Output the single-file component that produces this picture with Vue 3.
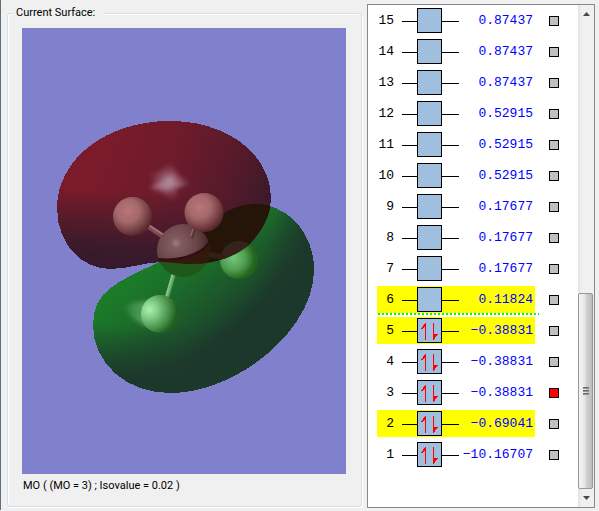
<template>
  <main class="viewer">
    <fieldset class="surface">
      <legend>Current Surface:</legend>
      <svg class="scene" viewBox="22 28 324 446" role="img" aria-label="MO">
        <defs>
          <linearGradient id="redBase" gradientUnits="userSpaceOnUse" x1="95" y1="150" x2="268" y2="218">
            <stop offset="0" stop-color="#7b1b2a" />
            <stop offset="0.4" stop-color="#6e1b2b" />
            <stop offset="0.75" stop-color="#541a2a" />
            <stop offset="1" stop-color="#371a2a" />
          </linearGradient>
          <linearGradient id="redShade" gradientUnits="userSpaceOnUse" x1="160" y1="195" x2="154" y2="260">
            <stop offset="0" stop-color="#361a2b" stop-opacity="0" />
            <stop offset="0.8" stop-color="#361a2b" stop-opacity="0.85" />
            <stop offset="1" stop-color="#361a2b" />
          </linearGradient>
          <linearGradient id="greenBase" gradientUnits="userSpaceOnUse" x1="140" y1="270" x2="225" y2="370">
            <stop offset="0" stop-color="#1b7c28" />
            <stop offset="0.3" stop-color="#1b6b2a" />
            <stop offset="0.6" stop-color="#1c502b" />
            <stop offset="0.8" stop-color="#1c382b" />
            <stop offset="1" stop-color="#1c352b" />
          </linearGradient>
          <linearGradient id="greenSide" gradientUnits="userSpaceOnUse" x1="266" y1="240" x2="312" y2="256">
            <stop offset="0" stop-color="#1c382b" stop-opacity="0" />
            <stop offset="0.85" stop-color="#1c382b" />
            <stop offset="1" stop-color="#1c382b" />
          </linearGradient>
          <linearGradient id="greenLow" gradientUnits="userSpaceOnUse" x1="135" y1="325" x2="132" y2="378">
            <stop offset="0" stop-color="#1c382b" stop-opacity="0" />
            <stop offset="1" stop-color="#1c382b" />
          </linearGradient>
          <radialGradient id="pinkAtom" cx="0.38" cy="0.36" r="0.65">
            <stop offset="0" stop-color="#b97679" />
            <stop offset="0.45" stop-color="#a4686b" />
            <stop offset="0.8" stop-color="#744044" />
            <stop offset="1" stop-color="#57262c" />
          </radialGradient>
          <radialGradient id="limeAtom" cx="0.22" cy="0.38" r="0.8">
            <stop offset="0" stop-color="#a9f2ae" />
            <stop offset="0.3" stop-color="#7fca84" />
            <stop offset="0.65" stop-color="#469147" />
            <stop offset="0.9" stop-color="#235e22" />
            <stop offset="1" stop-color="#235a20" />
          </radialGradient>
          <radialGradient id="dimAtom" cx="0.35" cy="0.45" r="0.65">
            <stop offset="0" stop-color="#76c77a" />
            <stop offset="0.5" stop-color="#4f9d50" />
            <stop offset="0.85" stop-color="#25661f" />
            <stop offset="1" stop-color="#22601f" />
          </radialGradient>
          <radialGradient id="carbon" cx="0.36" cy="0.36" r="0.66">
            <stop offset="0" stop-color="#a07c80" />
            <stop offset="0.15" stop-color="#815b5e" />
            <stop offset="0.6" stop-color="#6a4547" />
            <stop offset="1" stop-color="#40211f" />
          </radialGradient>
          <radialGradient id="redGlow">
            <stop offset="0" stop-color="#b597a7" />
            <stop offset="0.35" stop-color="#a06a7c" stop-opacity="0.75" />
            <stop offset="1" stop-color="#842c40" stop-opacity="0" />
          </radialGradient>
          <linearGradient id="greenGlow" x1="0" y1="0.3" x2="1" y2="0.4">
            <stop offset="0" stop-color="#60b36a" stop-opacity="0.15" />
            <stop offset="0.5" stop-color="#68ad70" stop-opacity="0.7" />
            <stop offset="1" stop-color="#68ad70" stop-opacity="0.8" />
          </linearGradient>
          <filter id="soft" x="-40%" y="-40%" width="180%" height="180%">
            <feGaussianBlur stdDeviation="2" />
          </filter>
          <clipPath id="inRed"><path :d="redLobe" /></clipPath>
          <clipPath id="inGreen"><path :d="greenLobe" /></clipPath>
          <clipPath id="inCarbon"><circle cx="183.500" cy="250.500" r="26.500" /></clipPath>
        </defs>

        <rect x="22" y="28" width="324" height="446" fill="#8080cc" />

        <!-- negative lobe -->
        <g shape-rendering="crispEdges">
          <path :d="greenLobe" fill="url(#greenBase)" />
          <path :d="greenLobe" fill="url(#greenSide)" />
          <path :d="greenLobe" fill="url(#greenLow)" />
        </g>
        <path d="M124 306 L135 302 L150 301 L160 304 L160 322 L145 326 L132 318 Z" fill="url(#greenGlow)" filter="url(#soft)" />
        <circle cx="239" cy="260" r="19" fill="url(#dimAtom)" />
        <path d="M174 273 L167 297" stroke="#64a564" stroke-width="4" />
        <path d="M173 273 L166 297" stroke="#83c385" stroke-width="2" />
        <circle cx="160" cy="314" r="19" fill="url(#limeAtom)" />
        <circle cx="183.500" cy="250.500" r="26.500" fill="#1f5919" />

        <!-- positive lobe -->
        <g shape-rendering="crispEdges">
          <path :d="redLobe" fill="url(#redBase)" />
          <path :d="redLobe" fill="url(#redShade)" />
        </g>
        <g filter="url(#soft)">
          <path d="M146 174 L160 171 L172 160 L177 174 L193 184 L178 188 L174 203 L164 194 L148 191 L154 183 Z" fill="url(#redGlow)" />
          <path d="M150 187 L164 181 L173 174 L172 183 L188 184 L173 187 L168 191 Z" fill="#b08a9b" opacity="0.65" />
        </g>

        <!-- overlap of both lobes -->
        <g clip-path="url(#inRed)">
          <g clip-path="url(#inGreen)">
            <path d="M276 200 H237 L221 205 L190 237 L157 257 V270 H280 Z" fill="#241508" shape-rendering="crispEdges" />
            <circle cx="239" cy="260" r="19" fill="#35221a" />
            <path d="M209 254 L226 258" stroke="#342012" stroke-width="5" />
          </g>
        </g>

        <path d="M146 225 L164 237" stroke="#7d4b4f" stroke-width="5" />
        <path d="M147 224 L164 235" stroke="#a87073" stroke-width="2" />
        <circle cx="132.500" cy="216.500" r="19.500" fill="url(#pinkAtom)" />
        <g clip-path="url(#inRed)">
          <circle cx="183.500" cy="250.500" r="26.500" fill="url(#carbon)" />
          <g clip-path="url(#inCarbon)">
            <path d="M156 258 Q178 261 194 254 Q208 248 210 239 L216 280 H150 Z" fill="#32190c" />
            <path d="M156 259 Q178 261 194 254 Q208 248 210 239" fill="none" stroke="#350b16" stroke-width="2" />
          </g>
        </g>
        <circle cx="204" cy="212.500" r="19.500" fill="url(#pinkAtom)" />
        <path d="M194 229 L191 238" stroke="#59363a" stroke-width="5" />
        <path d="M193 229 L190 237" stroke="#8c6063" stroke-width="2" />
      </svg>
      <p class="caption">MO ( (MO = 3) ; Isovalue = 0.02 )</p>
    </fieldset>

    <section class="orbitals">
      <div class="list">
        <label
          v-for="mo in orbitals"
          :key="mo.id"
          class="orbital"
          :class="{ marked: mo.marked, lumo: mo.id === 6 }"
        >
          <span class="level">
            <span class="num">{{ mo.id }}</span>
            <svg class="box" width="57" height="25" viewBox="0 0 57 25" shape-rendering="crispEdges">
              <rect y="13" width="57" height="1" />
              <rect x="15" width="25" height="25" />
              <rect x="16" y="1" width="23" height="23" fill="#a0bede" />
              <g v-if="mo.id <= 5" fill="#f00">
                <path d="M23 5 H24 V22 H23 V9 H22 V10 H21 V11 H19 V10 H20 V9 H21 V7 H22 V6 H23 Z" />
                <path d="M31 5 H32 V16 H36 V17 H35 V18 H34 V19 H33 V21 H32 V22 H31 Z" />
              </g>
            </svg>
            <span class="energy">{{ mo.energy }}</span>
          </span>
          <input v-model="mo.checked" type="checkbox" />
        </label>
      </div>
      <div class="scrollbar">
        <button type="button" class="arrow" aria-label="Up">
          <svg width="7" height="4" viewBox="0 0 7 4"><path d="M3.500 0 L7 4 H0 Z" fill="#484848" /></svg>
        </button>
        <div class="track">
          <div class="thumb"><i></i><i></i><i></i></div>
        </div>
        <button type="button" class="arrow" aria-label="Down">
          <svg width="7" height="4" viewBox="0 0 7 4"><path d="M0 0 H7 L3.500 4 Z" fill="#484848" /></svg>
        </button>
      </div>
    </section>
  </main>
</template>

<script setup>
import { reactive } from 'vue'

const redLobe =
  'M170 121 C105 121 57 160 57 208 C57 240 77 267 109 269 C130 269 140 263 160 262 C172 262 180 264 190 264 C212 264 231 259 249 245 C262 231 271 216 271 198 C271 155 228 121 170 121 Z'

const greenLobe =
  'M190 240 C178 250 168 258 157 263 C118 282 93 290 93 325 C93 363 126 393 170 393 C237 393 314 330 314 270 C314 233 288 204 255 204 C236 204 215 215 190 240 Z'

const energies = [
  '0.87437', '0.87437', '0.87437', '0.52915', '0.52915',
  '0.52915', '0.17677', '0.17677', '0.17677', '0.11824',
  '−0.38831', '−0.38831', '−0.38831', '−0.69041', '−10.16707',
]

const orbitals = reactive(
  energies.map((energy, i) => {
    const id = energies.length - i
    return { id, energy, marked: [6, 5, 2].includes(id), checked: id === 3 }
  })
)
</script>

<style>
body { margin: 0; background: #f0f0f0; }
</style>

<style scoped>
.viewer {
  display: flex;
  gap: 5px;
  padding: 4px 4px 2px 6px;
  border-left: 1px solid #5f6e7b;
  font: 11px/14px Roboto, "Liberation Sans", Arial, sans-serif;
  color: #000;
}
.surface {
  flex: 1;
  min-width: 0;
  margin: 2px 0 1px;
  padding: 8px 15px 13px 14px;
  border: 1px solid #d5dfe5;
  border-radius: 3px;
  box-shadow: inset 1px 1px #fff, 1px 1px #fff;
}
.surface legend {
  margin-left: -8px;
  padding: 0 9px 0 2px;
  background: #f0f0f0;
}
.scene {
  display: block;
  width: 100%;
}
.caption { margin: 5px 0 0 1px; }
.orbitals {
  display: flex;
  width: 226px;
  flex: none;
  border: 1px solid #828790;
  background: #fff;
}
.list {
  flex: 1;
  display: flex;
  flex-direction: column;
  gap: 4px;
  padding: 2px 0 0 9px;
}
.orbital {
  position: relative;
  display: flex;
  align-items: center;
  gap: 14px;
  height: 27px;
}
.level {
  display: flex;
  align-items: center;
  box-sizing: border-box;
  width: 158px;
  height: 27px;
  padding-right: 2px;
  font: 13px/16px "Liberation Mono", "Courier New", monospace;
}
.marked .level { background: #ff0; }
.num {
  width: 17px;
  text-align: right;
}
.box { margin-left: 8px; }
.energy {
  flex: 1;
  text-align: right;
  color: #00f;
}
/* HOMO / LUMO divider */
.lumo::after {
  content: "";
  position: absolute;
  left: 1px;
  top: 27px;
  width: 161px;
  height: 2px;
  background: repeating-linear-gradient(90deg, #0f0 0 2px, #fff 2px 4px);
}
.orbital input {
  appearance: none;
  box-sizing: border-box;
  width: 10px;
  height: 10px;
  margin: 0;
  border: 1px solid #000;
  background: #c0c0c0;
}
.orbital input:checked { background: #f00; }
.scrollbar {
  display: flex;
  flex-direction: column;
  width: 16px;
  background: linear-gradient(90deg, #e3e3e3, #f0f0f0 4px);
}
.arrow {
  display: flex;
  align-items: center;
  justify-content: center;
  height: 18px;
  padding: 0;
  border: 0;
  background: none;
}
.track {
  flex: 1;
  display: flex;
  flex-direction: column;
  justify-content: flex-end;
}
.thumb {
  display: flex;
  flex-direction: column;
  align-items: center;
  justify-content: center;
  gap: 1px;
  box-sizing: border-box;
  height: 42%;
  margin-right: 1px;
  border: 1px solid #979797;
  border-radius: 2px;
  background: linear-gradient(90deg, #f5f5f5, #e6e6e6 45%, #d2d2d2 55%, #bcbcbc);
}
.thumb i {
  width: 6px;
  height: 2px;
  background: linear-gradient(#555, #aaa);
}
</style>
